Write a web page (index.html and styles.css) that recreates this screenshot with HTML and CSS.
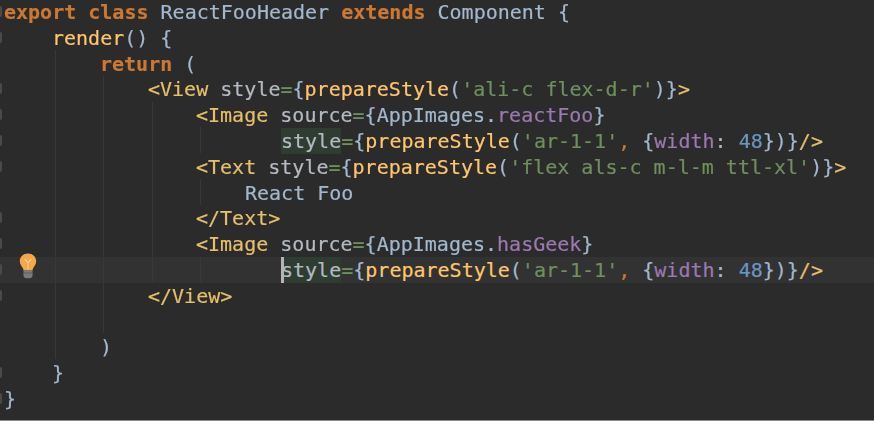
FILE: index.html
```html
<!DOCTYPE html>
<html lang="en">
<head>
<meta charset="utf-8">
<title>ReactFooHeader</title>
<link rel="stylesheet" href="styles.css">
</head>
<body>
<main class="editor">
  <div class="code">
    <div class="line fold"><span class="k">export class</span> <span class="c">ReactFooHeader</span> <span class="k">extends</span> <span class="c">Component</span> <span class="p">{</span></div>
    <div class="line fold i1"><span class="f">render</span><span class="p">() {</span></div>
    <div class="line i2"><span class="k">return</span> <span class="p">(</span></div>
    <div class="line fold i3"><span class="t">&lt;View</span> <span class="a">style</span><span class="s">=</span><span class="p">{</span><span class="f">prepareStyle</span><span class="p">(</span><span class="s">'ali-c flex-d-r'</span><span class="p">)}</span><span class="t">&gt;</span></div>
    <div class="line fold i4"><span class="t">&lt;Image</span> <span class="a">source</span><span class="s">=</span><span class="p">{</span><span class="c">AppImages</span><span class="p">.</span><span class="m">reactFoo</span><span class="p">}</span></div>
    <div class="line fold i6"><span class="a hl">style</span><span class="s">=</span><span class="p">{</span><span class="f">prepareStyle</span><span class="p">(</span><span class="s">'ar-1-1'</span><span class="k2">,</span> <span class="p">{</span><span class="m">width</span><span class="p">:</span> <span class="n">48</span><span class="p">})}</span><span class="t">/&gt;</span></div>
    <div class="line fold i4"><span class="t">&lt;Text</span> <span class="a">style</span><span class="s">=</span><span class="p">{</span><span class="f">prepareStyle</span><span class="p">(</span><span class="s">'flex als-c m-l-m ttl-xl'</span><span class="p">)}</span><span class="t">&gt;</span></div>
    <div class="line i5"><span class="c">React Foo</span></div>
    <div class="line fold i4"><span class="t">&lt;/Text&gt;</span></div>
    <div class="line fold i4"><span class="t">&lt;Image</span> <span class="a">source</span><span class="s">=</span><span class="p">{</span><span class="c">AppImages</span><span class="p">.</span><span class="m">hasGeek</span><span class="p">}</span></div>
    <div class="line fold i6 current"><svg class="bulb" viewBox="0 0 18 26" width="18" height="26" aria-hidden="true"><path d="M9 0.5C4.3 0.5 0.8 3.8 0.8 8.2c0 3.400 2.200 5 3.200 7.300.3.700.5 1.300.5 2h9c0-.7.2-1.300.5-2 1-2.300 3.200-3.900 3.200-7.300C17.200 3.800 13.700 0.500 9 0.500z" fill="#f4a84a"/><path d="M5.700 5.800 9 9.800l3.300-4M9 9.800V16" fill="none" stroke="#ffd58f" stroke-width="1.100"/><path d="M4.500 17.500h9v5.200c0 1.600-1.600 2.600-4.500 2.600s-4.500-1-4.500-2.600z" fill="#7b7b7b"/><path d="M4.500 20h9" stroke="#5f5f5f" stroke-width="1"/></svg><span class="caret"></span><span class="a hl">style</span><span class="s">=</span><span class="p">{</span><span class="f">prepareStyle</span><span class="p">(</span><span class="s">'ar-1-1'</span><span class="k2">,</span> <span class="p">{</span><span class="m">width</span><span class="p">:</span> <span class="n">48</span><span class="p">})}</span><span class="t">/&gt;</span></div>
    <div class="line fold i3"><span class="t">&lt;/View&gt;</span></div>
    <div class="line"></div>
    <div class="line i2"><span class="p">)</span></div>
    <div class="line fold i1"><span class="p">}</span></div>
    <div class="line fold"><span class="p">}</span></div>
  </div>
  <span class="guide g1"></span>
  <span class="guide g2"></span>
  <span class="guide g3"></span>
  <span class="guide g4a"></span>
  <span class="guide g4b"></span>
  <span class="guide g4c"></span>
</main>
</body>
</html>
```
FILE: styles.css
```css
html, body {
  margin: 0;
  padding: 0;
  background: #ffffff;
}
.editor {
  position: relative;
  height: 420px;
  overflow: hidden;
  background: #2b2b2b;
  border-bottom: 1px solid #8a8a8a;
  font-family: "DejaVu Sans Mono", monospace;
  font-size: 20px;
  color: #a9b7c6;
}
.code {
  margin-top: -1px;
  filter: blur(0.3px);
  -webkit-text-stroke: 0.2px;
}
.line {
  position: relative;
  height: 25.8px;
  line-height: 27.8px;
  padding-left: 4px;
  white-space: pre;
}
.fold::before {
  content: "";
  position: absolute;
  left: 0;
  top: 7px;
  width: 2px;
  height: 11px;
  border-radius: 0 2px 2px 0;
  background: #4a4a4a;
}
.i1 { padding-left: 52px; }
.i2 { padding-left: 100px; }
.i3 { padding-left: 148px; }
.i4 { padding-left: 196px; }
.i5 { padding-left: 245px; }
.i6 { padding-left: 281px; }
.current { background: #323232; }
.k { color: #cc7832; font-weight: bold; }
.k2 { color: #cc7832; }
.c { color: #a3b8cf; }
.p { color: #a3b8cf; }
.f { color: #ffc66d; }
.t { color: #e8bf6a; }
.a { color: #b4bac2; }
.s { color: #6f8f5c; }
.m { color: #9d78b2; }
.n { color: #6897c4; }
.hl {
  display: inline-block;
  height: 25.8px;
  vertical-align: top;
  background: #2f3c31;
}
.caret {
  position: absolute;
  left: 281px;
  top: 0;
  width: 3px;
  height: 100%;
  background: #b5b5b5;
  z-index: 1;
}
.bulb {
  position: absolute;
  left: 19px;
  top: -4px;
}
.guide {
  position: absolute;
  width: 1px;
  background: #383838;
}
.g1 { left: 55px; top: 50px; height: 309px; }
.g2 { left: 103px; top: 76px; height: 257px; }
.g3 { left: 152px; top: 102px; height: 180px; }
.g4a { left: 200px; top: 127px; height: 26px; }
.g4b { left: 200px; top: 179px; height: 26px; }
.g4c { left: 200px; top: 257px; height: 26px; }
```
